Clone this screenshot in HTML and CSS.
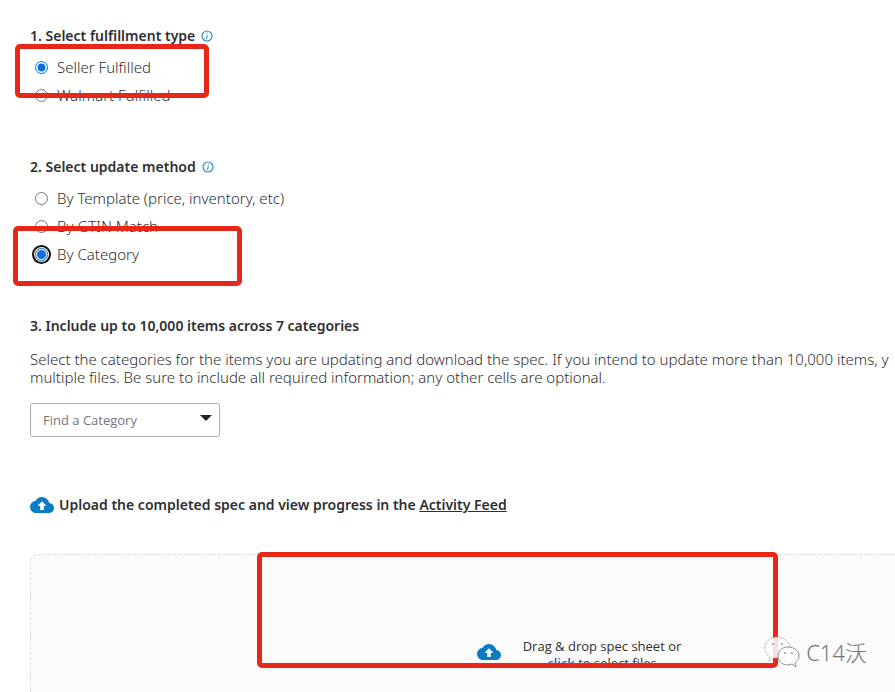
FILE: index.html
```html
<!DOCTYPE html>
<html lang="en">
<head>
    <meta charset="UTF-8">
    <meta name="viewport" content="width=device-width, initial-scale=1.0">
    <title>Update Items</title>
    <link rel="stylesheet" href="styles.css">
</head>
<body>
    <!-- Shared icons -->
    <svg class="icon-defs" aria-hidden="true">
        <symbol id="icon-info" viewBox="0 0 12 12">
            <circle cx="6" cy="6" r="5" fill="none" stroke="#2a8fbd" stroke-width="1.2"/>
            <path d="M6.7 2.8v1.1M6.3 5L5.5 9" fill="none" stroke="#2a8fbd" stroke-width="1"/>
        </symbol>
        <symbol id="icon-cloud" viewBox="0 4 24 16">
            <path fill="#0a7cc1" d="M19.35 10.04A7.49 7.49 0 0 0 12 4C9.11 4 6.6 5.64 5.35 8.04A5.994 5.994 0 0 0 0 14c0 3.31 2.69 6 6 6h13c2.76 0 5-2.24 5-5 0-2.64-2.05-4.78-4.65-4.96z"/>
            <path fill="#fff" d="M12 8.3l4.4 4.4h-2.6V17h-3.6v-4.3H7.6z"/>
        </symbol>
    </svg>

    <main class="page">
        <section class="step">
            <h2 class="step-title">1. Select fulfillment type
                <svg class="info"><use href="#icon-info"/></svg>
            </h2>
            <div class="options">
                <label class="option"><input type="radio" name="fulfillment" checked>Seller Fulfilled</label>
                <label class="option"><input type="radio" name="fulfillment">Walmart Fulfilled</label>
                <div class="mark mark-seller"></div>
            </div>
        </section>

        <section class="step">
            <h2 class="step-title">2. Select update method
                <svg class="info"><use href="#icon-info"/></svg>
            </h2>
            <div class="options">
                <label class="option"><input type="radio" name="method">By Template (price, inventory, etc)</label>
                <label class="option"><input type="radio" name="method">By GTIN Match</label>
                <label class="option"><input class="focused" type="radio" name="method" checked>By Category</label>
                <div class="mark mark-category"></div>
            </div>
        </section>

        <section class="step">
            <h2 class="step-title">3. Include up to 10,000 items across 7 categories</h2>
            <p class="intro">Select the categories for the items you are updating and download the spec. If you intend to update more than 10,000 items, y<br>multiple files. Be sure to include all required information; any other cells are optional.</p>
            <div class="select-box">
                <select class="category" aria-label="Find a Category">
                    <option>Find a Category</option>
                </select>
            </div>
        </section>

        <h2 class="upload-title">
            <svg class="cloud"><use href="#icon-cloud"/></svg>
            <span>Upload the completed spec and view progress in the <a href="#">Activity Feed</a></span>
        </h2>

        <div class="dropzone">
            <svg class="cloud"><use href="#icon-cloud"/></svg>
            <p class="drop-text">Drag &amp; drop spec sheet or<br><a href="#">click</a> to select files</p>
            <div class="mark mark-drop"></div>
            <div class="watermark">
                <svg class="bubbles" viewBox="0 0 36 32">
                    <path d="M13 1C6 1 1 6 1 12c0 4 2 7 5 9l-1 4 5-3h4c7 0 12-4 12-10S20 1 13 1z" fill="#fff" fill-opacity=".85" stroke="#999" stroke-width=".7" stroke-dasharray="3 1"/>
                    <path d="M24 11c-6 0-10 4-10 9s4 9 10 9l4-1 4 3-1-4c2-2 4-4 4-7 0-5-5-9-11-9z" fill="#fcfcfc" stroke="#777" stroke-width=".8"/>
                    <path d="M8 8h2M17 8h2M20 17h2M27 17h2" stroke="#666" stroke-width="1.2"/>
                </svg>
                <span>C14沃</span>
            </div>
        </div>
    </main>
</body>
</html>
```
FILE: styles.css
```css
* {
    box-sizing: border-box;
}
body {
    margin: 0;
    background: #fff;
    color: #2e2f32;
    font-family: "Noto Sans", "Open Sans", sans-serif;
    font-size: 15px;
    font-weight: 300;
    overflow-x: hidden;
}
h2, p {
    margin: 0;
}
.icon-defs {
    display: none;
}
.page {
    display: flex;
    flex-direction: column;
    min-height: 100vh;
    padding: 25px 0 0 30px;
}

/* Steps */
.step {
    margin-bottom: 47px;
}
.step-title {
    display: flex;
    align-items: center;
    gap: 6px;
    font-size: 14px;
    font-weight: 600;
    line-height: 22px;
}
.info {
    width: 12px;
    height: 12px;
}
.options {
    position: relative;
    display: flex;
    flex-direction: column;
    align-items: flex-start;
    margin-top: 6px;
}
.option {
    display: flex;
    align-items: center;
    height: 28px;
    gap: 9px;
    padding-left: 5px;
    line-height: 18px;
}
.option input {
    width: 13px;
    height: 13px;
    margin: 0;
    accent-color: #0b70dc;
}
.option .focused {
    appearance: none;
    border: 1px solid #0b70dc;
    border-radius: 50%;
    background: radial-gradient(circle, #0b70dc 4px, #fff 5px);
    box-shadow: 0 0 0 1px #fff, 0 0 0 3px #101010;
}
.intro {
    margin-top: 13px;
    line-height: 18px;
    white-space: nowrap;
}

/* Category drop-down */
.select-box {
    position: relative;
    width: 190px;
    margin-top: 17px;
}
.select-box::after {
    content: "";
    position: absolute;
    top: 12px;
    right: 8px;
    border: 6px solid transparent;
    border-top-color: #222;
    border-bottom: 0;
    pointer-events: none;
}
.category {
    display: block;
    width: 100%;
    height: 34px;
    padding: 0 12px;
    appearance: none;
    border: 1px solid #aeaeae;
    border-radius: 3px;
    background: #fff;
    color: #74767c;
    font-family: "Open Sans", sans-serif;
    font-size: 13px;
}

/* Upload */
.upload-title {
    display: flex;
    align-items: center;
    gap: 5px;
    margin-top: 10px;
    font-size: 14px;
    font-weight: 600;
    line-height: 22px;
}
.upload-title a {
    color: inherit;
}
.cloud {
    flex: none;
    width: 24px;
    height: 16px;
}
.dropzone {
    position: relative;
    display: flex;
    flex: 1;
    align-items: flex-start;
    justify-content: center;
    gap: 22px;
    min-height: 138px;
    margin-top: 38px;
    padding: 83px 0 0 232px;
    border: 1px dashed #dcdcdc;
    border-width: 1px 0 0 1px;
    border-radius: 8px 0 0 0;
    background: #fbfbfb;
}
.dropzone .cloud {
    margin-top: 6px;
}
.drop-text {
    font-family: "Open Sans", sans-serif;
    font-size: 13px;
    font-weight: 400;
    line-height: 17px;
    text-align: center;
}
.drop-text a {
    color: #1a63b5;
    font-weight: 600;
    text-decoration: none;
}

/* Red highlight frames */
.mark {
    position: absolute;
    border: 5px solid #e8271b;
    border-radius: 5px;
    pointer-events: none;
}
.mark-seller {
    top: -9px;
    left: -15px;
    width: 194px;
    height: 54px;
}
.mark-category {
    top: 42px;
    left: -17px;
    width: 229px;
    height: 60px;
}
.mark-drop {
    top: -3px;
    left: 226px;
    width: 521px;
    height: 116px;
}

/* Watermark */
.watermark {
    position: absolute;
    top: 81px;
    right: 28px;
    display: flex;
    align-items: center;
    gap: 6px;
    color: #777;
    font-family: "Noto Sans", "Noto Sans CJK SC", sans-serif;
    font-size: 22px;
    line-height: 32px;
}
.bubbles {
    width: 36px;
    height: 32px;
}
```
